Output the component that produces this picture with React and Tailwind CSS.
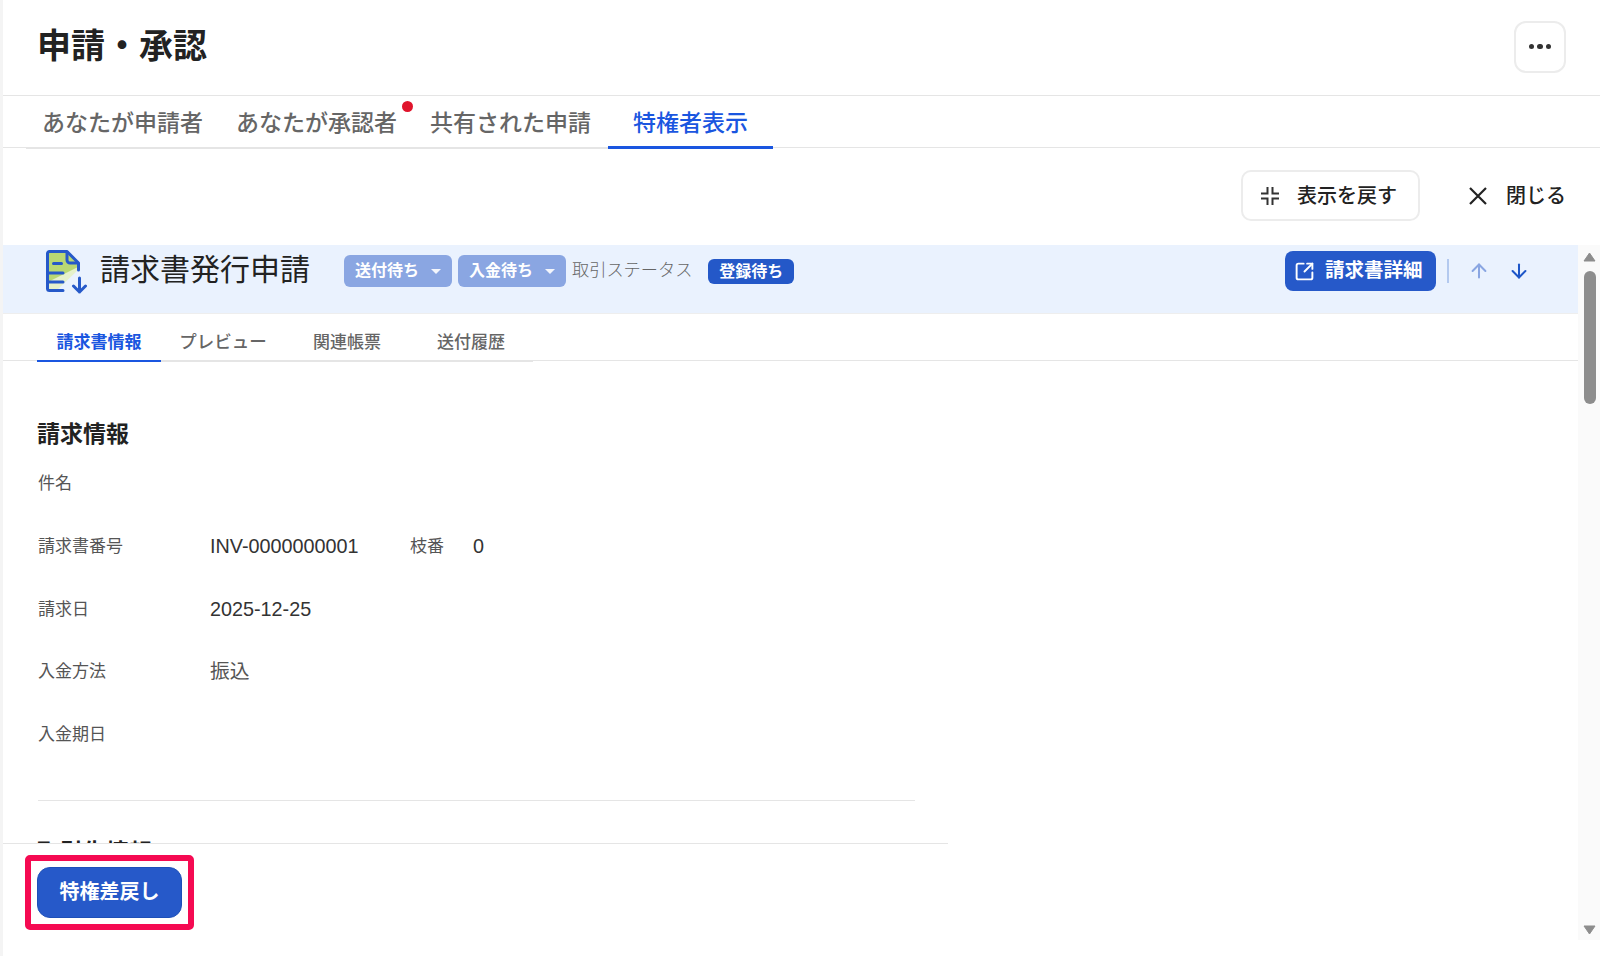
import { ArrowUp, ArrowDown, SquareArrowOutUpRight } from 'lucide-react';

const tabs = ['あなたが申請者', 'あなたが承認者', '共有された申請'];
const subTabs = ['プレビュー', '関連帳票', '送付履歴'];

function Row({ label, children }) {
    return (
        <div className="flex items-center h-[62.75px]">
            <div className="w-[172px] text-[17px] text-[#555]">{label}</div>
            {children}
        </div>
    );
}

function Pill({ label }) {
    return (
        <div className="flex items-center w-[108px] h-[32px] pl-[11px] rounded-[6px] bg-[#8aa6e2] text-white text-[16px] font-bold leading-none">
            <span>{label}</span>
            <span className="ml-[12px] mt-[1px] border-x-[5px] border-x-transparent border-t-[5px] border-t-white/90" />
        </div>
    );
}

function DocIcon() {
    return (
        <svg width="42" height="44" viewBox="0 0 42 44" fill="none" className="shrink-0">
            <path d="M2 3h20l10 10v7L11 40H2z" fill="#e6f1cb" />
            <path d="M2 3h20l10 10v4L2 32z" fill="#b9d873" />
            <path d="M17 40.5H3.5a2 2 0 0 1-2-2v-35a2 2 0 0 1 2-2h17.5l11.5 11.5v7" stroke="#2659c9" strokeWidth="3" strokeLinecap="round" strokeLinejoin="round" />
            <path d="M21 2v8a3 3 0 0 0 3 3h8M7.5 13.5h8M2 23h15M2 32h15" stroke="#2659c9" strokeWidth="3" strokeLinecap="round" />
            <path d="M33.5 28v14M27.5 36l6 6 6-6" stroke="#2659c9" strokeWidth="3" strokeLinecap="round" strokeLinejoin="round" />
        </svg>
    );
}

export default function App() {
    return (
        <div className="w-[1600px] h-[956px] overflow-hidden bg-white border-l-[3px] border-[#f4f4f4] flex flex-col text-[#222] font-['Liberation_Sans','Noto_Sans_CJK_JP',sans-serif]">
            {/* Header */}
            <header className="h-[96px] shrink-0 flex items-center justify-between border-b border-[#e5e5e5] pl-[34px] pr-[34px]">
                <h1 className="text-[34px] font-bold leading-none -mt-[4px]">申請・承認</h1>
                <button className="w-[52px] h-[52px] -mt-[2px] rounded-[12px] border-2 border-[#ececec] flex items-center justify-center gap-[3px]">
                    <span className="w-[5.5px] h-[5.5px] rounded-full bg-[#333]" />
                    <span className="w-[5.5px] h-[5.5px] rounded-full bg-[#333]" />
                    <span className="w-[5.5px] h-[5.5px] rounded-full bg-[#333]" />
                </button>
            </header>

            {/* Tabs */}
            <nav className="h-[52px] shrink-0 border-b border-[#e5e5e5] pl-[23px] flex">
                {tabs.map((t, i) => (
                    <div key={t} className="relative w-[194px] h-[53px] pl-[16px] pt-[4px] flex items-center border-b-2 border-[#e5e5e5] text-[23px] font-medium text-[#666]">
                        {t}
                        {i === 1 && <span className="absolute left-[182px] top-[5px] w-[11px] h-[11px] rounded-full bg-[#e0142c]" />}
                    </div>
                ))}
                <div className="w-[165px] h-[53px] pt-[4px] flex items-center justify-center border-b-[3px] border-[#1a56e0] text-[23px] font-medium text-[#1a56e0]">特権者表示</div>
            </nav>

            {/* Toolbar */}
            <div className="h-[97px] shrink-0 flex justify-end items-center gap-[49px] pr-[34px] pb-[2px]">
                <button className="w-[179px] h-[51px] rounded-[10px] border-2 border-[#ececec] flex items-center pl-[18px] text-[20px] font-medium">
                    <svg width="18" height="18" viewBox="0 0 18 18" fill="none" stroke="#333" strokeWidth="2" className="mr-[18px]">
                        <path d="M6.5 0v6.5H0M11.5 0v6.5H18M6.5 18v-6.5H0M11.5 18v-6.5H18" />
                    </svg>
                    表示を戻す
                </button>
                <button className="flex items-center text-[20px] font-medium">
                    <svg width="18" height="18" viewBox="0 0 18 18" fill="none" stroke="#222" strokeWidth="2.2" className="mr-[19px]">
                        <path d="M1 1l16 16M17 1L1 17" />
                    </svg>
                    閉じる
                </button>
            </div>

            {/* Main */}
            <div className="flex h-[695px] shrink-0">
                <div className="flex-1 min-w-0 flex flex-col">
                    <div className="h-[69px] shrink-0 bg-[#eaf2fe] border-b border-[#eeeeee] flex items-start pl-[43px] pr-[48px] pt-[5px]">
                        <DocIcon />
                        <div className="ml-[12px] w-[244px] text-[30px] leading-[38px] text-[#222] font-normal mt-[1px]">請求書発行申請</div>
                        <div className="flex gap-[6px] mt-[5px]">
                            <Pill label="送付待ち" />
                            <Pill label="入金待ち" />
                        </div>
                        <div className="ml-[6px] mt-[8px] text-[17.2px] leading-[24px] font-light text-[#666]">取引ステータス</div>
                        <div className="ml-[16px] mt-[9px] w-[86px] h-[25px] flex items-center justify-center rounded-[6px] bg-[#2458c8] text-white text-[16px] font-bold">登録待ち</div>
                        <div className="flex-1" />
                        <button className="w-[151px] h-[40px] mt-px rounded-[8px] bg-[#2659c9] text-white flex items-center pl-[9px] text-[19.5px] font-bold">
                            <SquareArrowOutUpRight size={21} strokeWidth={2.2} className="mr-[10px]" />
                            請求書詳細
                        </button>
                        <div className="w-[2px] h-[24px] bg-[#b3c9ef] ml-[11px] mt-[9px]" />
                        <ArrowUp size={22} strokeWidth={2.2} className="ml-[19px] mt-[10px] text-[#8aa6e2]" />
                        <ArrowDown size={22} strokeWidth={2.2} className="ml-[18px] mt-[10px] text-[#1d56c8]" />
                    </div>

                    <div className="h-[47px] shrink-0 border-b border-[#e5e5e5] pl-[34px] flex">
                        <div className="w-[124px] h-[48px] pt-[11px] flex items-center justify-center border-b-2 border-[#1a56e0] text-[17px] font-bold text-[#1a56e0]">請求書情報</div>
                        {subTabs.map((t, i) => (
                            <div key={t} className={`w-[124px] h-[48px] pt-[11px] flex items-center justify-center border-b-2 border-[#e5e5e5] font-medium text-[#666] ${i === 0 ? 'text-[17.5px]' : 'text-[17px]'}`}>{t}</div>
                        ))}
                    </div>

                    <div className="flex-1 min-h-0 overflow-hidden pl-[35px] pt-[58px]">
                        <h2 className="h-[30px] -ml-px text-[23px] font-bold leading-[30px] mb-[3.6px]">請求情報</h2>
                        <Row label="件名" />
                        <Row label="請求書番号">
                            <span className="w-[200px] text-[19.8px] text-[#333]">INV-0000000001</span>
                            <span className="w-[63px] text-[17px] text-[#555]">枝番</span>
                            <span className="text-[19.8px] text-[#333]">0</span>
                        </Row>
                        <Row label="請求日">
                            <span className="text-[19.8px] text-[#333]">2025-12-25</span>
                        </Row>
                        <Row label="入金方法">
                            <span className="text-[19.8px] text-[#555]">振込</span>
                        </Row>
                        <Row label="入金期日" />
                        <div className="w-[877px] h-px bg-[#e5e5e5] mt-[33.6px]" />
                        <h2 className="h-[30px] -ml-px mt-[36px] text-[23px] font-bold leading-[30px]">取引先情報</h2>
                    </div>

                    <footer className="w-[945px] h-[97px] shrink-0 border-t border-[#e5e5e5] bg-white pt-[11px] pl-[22px]">
                        <div className="w-[169px] h-[75px] border-[6px] border-[#f50a52] rounded-[5px] p-[6px]">
                            <button className="w-full h-full pb-[2px] rounded-[13px] bg-[#2659c9] border border-[#1d4fb8] text-white text-[20px] font-bold">特権差戻し</button>
                        </div>
                    </footer>
                </div>

                {/* Scrollbar */}
                <div className="w-[22px] shrink-0 bg-[#fafafa] flex flex-col items-center pt-[7px] pb-[5px] pl-[1px]">
                    <svg width="13" height="10" viewBox="0 0 13 10"><path d="M6.5 1L12 9H1z" fill="#8d8d8d" stroke="#8d8d8d" strokeLinejoin="round" /></svg>
                    <div className="w-[12px] h-[133px] mt-[9px] rounded-full bg-[#8d8d8d]" />
                    <div className="flex-1" />
                    <svg width="13" height="10" viewBox="0 0 13 10"><path d="M6.5 9L12 1H1z" fill="#8d8d8d" stroke="#8d8d8d" strokeLinejoin="round" /></svg>
                </div>
            </div>
        </div>
    );
}
